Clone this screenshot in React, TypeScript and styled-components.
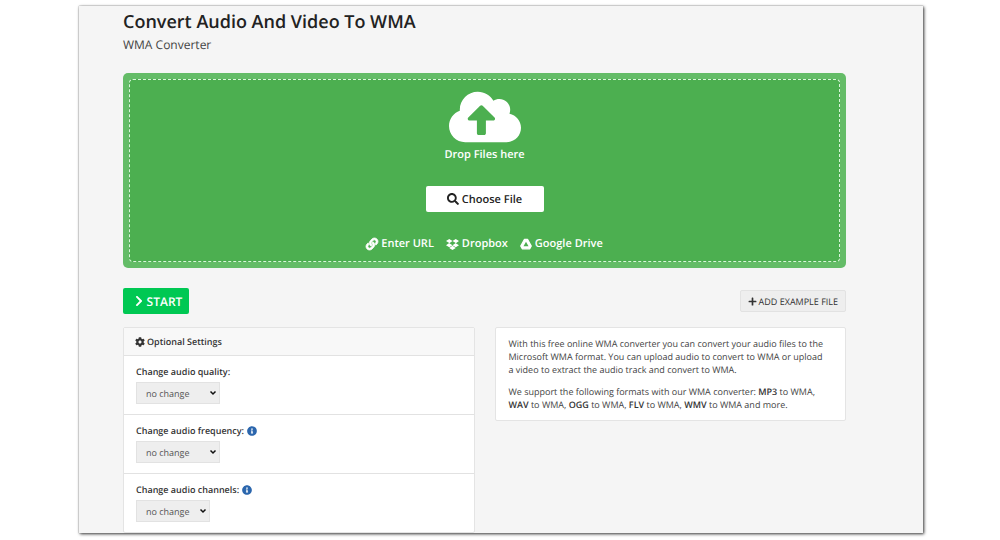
import React from "react";
import styled, { createGlobalStyle } from "styled-components";
import {
  FaChevronRight,
  FaCloudUploadAlt,
  FaCog,
  FaDropbox,
  FaInfoCircle,
  FaLink,
  FaPlus,
  FaSearch,
} from "react-icons/fa";

const GlobalStyle = createGlobalStyle`
  *, *::before, *::after { box-sizing: border-box; }
  body {
    margin: 0;
    background: #fff;
    color: #444;
    font-family: "Open Sans", "Noto Sans", sans-serif;
    font-size: 9px;
    line-height: 13px;
    text-rendering: geometricPrecision;
  }
  button, select { font-family: inherit; text-rendering: inherit; }
  h1, h2, p { margin: 0; }
  svg { display: block; flex: none; }
`;

const Page = styled.div`
  padding: 6px 77px 7px 79px;
`;

const Frame = styled.main`
  padding: 4px 77px 0 44px;
  background: #f5f5f5;
  box-shadow: 0 0 1px 0 #777, 1px 1px 3px 0 #333;
`;

const Title = styled.h1`
  color: #222;
  font-size: 18px;
  font-weight: 600;
  line-height: 24px;
`;

const Subtitle = styled.p`
  margin-top: 2px;
  font-size: 12px;
  line-height: 18px;
`;

const DropZone = styled.section`
  margin-top: 19px;
  padding: 6px;
  border-radius: 5px;
  background: #64bc67;
`;

const DropArea = styled.div`
  display: flex;
  flex-direction: column;
  align-items: center;
  padding: 8px 12px;
  border: 1px dashed #d9f5da;
  border-radius: 4px;
  background: #4caf50;
  color: #fff;
`;

const CloudIcon = styled(FaCloudUploadAlt)`
  width: 72px;
  height: 58px;
`;

const DropText = styled.p`
  font-size: 11px;
  font-weight: 600;
  line-height: 18px;
`;

const ChooseButton = styled.button`
  display: flex;
  align-items: center;
  justify-content: center;
  gap: 3px;
  width: 118px;
  height: 26px;
  margin-top: 22px;
  padding: 0;
  border: 0;
  border-radius: 2px;
  background: #fff;
  color: #222;
  font-size: 11px;
  font-weight: 600;
`;

const Sources = styled.nav`
  display: flex;
  gap: 12px;
  margin-top: 23px;
`;

const SourceLink = styled.a`
  display: flex;
  align-items: center;
  gap: 3px;
  color: #fff;
  font-size: 11px;
  font-weight: 600;
  line-height: 18px;
  text-decoration: none;
`;

const ChainIcon = styled(FaLink)`
  stroke: currentColor;
  stroke-width: 32px;
  overflow: visible;
`;

const Actions = styled.div`
  display: flex;
  align-items: center;
  justify-content: space-between;
  margin-top: 20px;
`;

const StartButton = styled.button`
  display: flex;
  align-items: center;
  justify-content: center;
  gap: 2px;
  width: 66px;
  height: 26px;
  padding: 0 0 0 3px;
  border: 0;
  border-radius: 2px;
  background: #00c853;
  color: #fff;
  font-size: 12px;
  font-weight: 600;
`;

const ExampleButton = styled.button`
  display: flex;
  align-items: center;
  gap: 2px;
  height: 22px;
  padding: 0 7px;
  border: 1px solid #e2e2e2;
  border-radius: 2px;
  background: #eee;
  color: #333;
  font-size: 9px;
`;

const Columns = styled.div`
  display: grid;
  grid-template-columns: 1fr 1fr;
  align-items: start;
  gap: 20px;
  margin-top: 13px;
`;

const Card = styled.section`
  border: 1px solid #e4e4e4;
  border-radius: 2px;
  background: #fff;
`;

const CardHeader = styled.h2`
  display: flex;
  align-items: center;
  gap: 2px;
  height: 27px;
  padding: 0 11px;
  background: #f8f8f8;
  color: #333;
  font-size: 9px;
  font-weight: 600;
`;

const Setting = styled.div`
  display: flex;
  flex-direction: column;
  align-items: flex-start;
  gap: 4px;
  height: 59px;
  padding: 9px 12px 0;
  border-top: 1px solid #e2e2e2;
`;

const SettingLabel = styled.label`
  display: flex;
  align-items: center;
  gap: 3px;
  color: #333;
  font-size: 9px;
  font-weight: 600;
`;

const InfoIcon = styled(FaInfoCircle)`
  color: #2b66ad;
`;

const SelectBox = styled.div`
  display: grid;
  align-items: center;

  > * {
    grid-area: 1 / 1;
  }
`;

const SettingSelect = styled.select<{ $narrow?: boolean }>`
  appearance: none;
  width: ${({ $narrow }) => ($narrow ? "74px" : "84px")};
  height: 22px;
  padding: 0 16px 0 9px;
  border: 1px solid #e2e2e2;
  border-radius: 0;
  background-color: #eee;
  color: #555;
  font-size: 9px;
`;

const SelectArrow = styled.svg`
  justify-self: end;
  width: 8px;
  height: 6px;
  margin-right: 3px;
  color: #111;
  pointer-events: none;
`;

const Description = styled(Card)`
  display: flex;
  flex-direction: column;
  gap: 9px;
  padding: 9px 18px 9px 13px;

  b {
    color: #333;
    font-weight: 600;
  }
`;

function DriveIcon({ size }: { size: number }) {
  return (
    <svg width={size} height={size} viewBox="0 0 24 24" aria-hidden="true">
      <path
        d="M9 2.5h6L22.5 16l-3 5.5h-15l-3-5.5z"
        fill="currentColor"
        stroke="currentColor"
        strokeWidth="2.5"
        strokeLinejoin="round"
      />
      <path d="M12 7.500L17 16.500H7z" fill="#4caf50" />
    </svg>
  );
}

const sources = [
  { label: "Enter URL", icon: <ChainIcon size={12} /> },
  { label: "Dropbox", icon: <FaDropbox size={13} /> },
  { label: "Google Drive", icon: <DriveIcon size={12} /> },
];

const settings = [
  { id: "quality", label: "Change audio quality:", info: false, narrow: false },
  { id: "frequency", label: "Change audio frequency:", info: true, narrow: false },
  { id: "channels", label: "Change audio channels:", info: true, narrow: true },
];

export default function App() {
  return (
    <Page>
      <GlobalStyle />
      <Frame>
        <Title>Convert Audio And Video To WMA</Title>
        <Subtitle>WMA Converter</Subtitle>
        <DropZone>
          <DropArea>
            <CloudIcon />
            <DropText>Drop Files here</DropText>
            <ChooseButton type="button">
              <FaSearch size={12} />
              Choose File
            </ChooseButton>
            <Sources>
              {sources.map(({ label, icon }) => (
                <SourceLink key={label} href="#">
                  {icon}
                  {label}
                </SourceLink>
              ))}
            </Sources>
          </DropArea>
        </DropZone>
        <Actions>
          <StartButton type="button">
            <FaChevronRight size={12} />
            START
          </StartButton>
          <ExampleButton type="button">
            <FaPlus size={9} />
            ADD EXAMPLE FILE
          </ExampleButton>
        </Actions>
        <Columns>
          <Card>
            <CardHeader>
              <FaCog size={10} />
              Optional Settings
            </CardHeader>
            {settings.map(({ id, label, info, narrow }) => (
              <Setting key={id}>
                <SettingLabel htmlFor={id}>
                  {label}
                  {info && <InfoIcon size={10} />}
                </SettingLabel>
                <SelectBox>
                  <SettingSelect id={id} $narrow={narrow}>
                    <option>no change</option>
                  </SettingSelect>
                  <SelectArrow viewBox="0 0 8 6" aria-hidden="true">
                    <path d="M1.500 1.500L4 4L6.500 1.500" fill="none" stroke="currentColor" strokeWidth="1.500" />
                  </SelectArrow>
                </SelectBox>
              </Setting>
            ))}
          </Card>
          <Description>
            <p>
              With this free online WMA converter you can convert your audio files to the Microsoft
              WMA format. You can upload audio to convert to WMA or upload a video to extract the
              audio track and convert to WMA.
            </p>
            <p>
              We support the following formats with our WMA converter: <b>MP3</b> to WMA,{" "}
              <b>WAV</b> to WMA, <b>OGG</b> to WMA, <b>FLV</b> to WMA, <b>WMV</b> to WMA and more.
            </p>
          </Description>
        </Columns>
      </Frame>
    </Page>
  );
}
